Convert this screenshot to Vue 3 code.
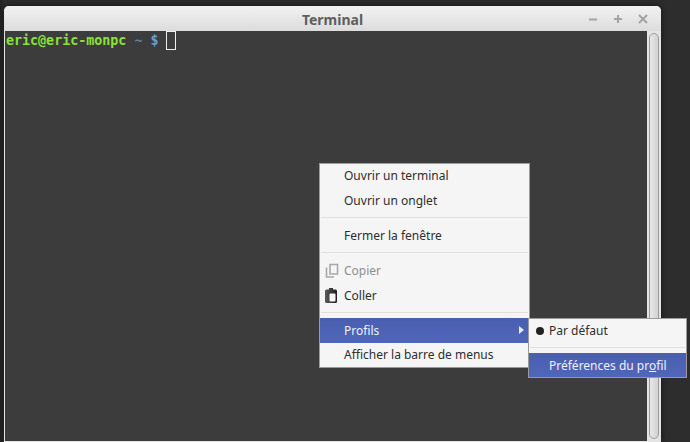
<script setup>
const topItems = [
  { label: 'Ouvrir un terminal' },
  { label: 'Ouvrir un onglet' }
]
</script>

<template>
  <div class="desktop">
    <div class="window">
      <header class="titlebar">
        <span class="title">Terminal</span>
        <div class="controls">
          <svg width="12" height="12" viewBox="0 0 12 12"><path d="M2 6.500h8" stroke="#a3a3a3" stroke-width="2"/></svg>
          <svg width="12" height="12" viewBox="0 0 12 12"><path d="M2 6h8M6 2v8" stroke="#a3a3a3" stroke-width="2"/></svg>
          <svg width="12" height="12" viewBox="0 0 12 12"><path d="M2 2l8 8M10 2l-8 8" stroke="#a3a3a3" stroke-width="2"/></svg>
        </div>
      </header>
      <div class="body">
        <div class="terminal">
          <div class="prompt"><span class="green">eric@eric-monpc</span> <span class="blue1">~</span> <span class="blue2">$</span> <span class="cursor"></span></div>
        </div>
        <div class="scrollbar"><div class="thumb"></div></div>
      </div>
    </div>

    <div class="menu main-menu">
      <div v-for="i in topItems" :key="i.label" class="item">{{ i.label }}</div>
      <div class="sep"></div>
      <div class="item">Fermer la fenêtre</div>
      <div class="sep"></div>
      <div class="item disabled">
        <svg class="icon" width="14" height="15" viewBox="0 0 14 15"><path d="M5 1.500h7.500v9.500H5z M1.500 4.500v9.500h7.500" fill="none" stroke="#a8a8a8" stroke-width="1.600"/></svg>
        Copier
      </div>
      <div class="item">
        <svg class="icon paste" width="12" height="15" viewBox="0 0 12 15">
          <defs><linearGradient id="clip" x1="0" y1="0" x2="1" y2="0"><stop offset="0" stop-color="#5a5a5a"/><stop offset="1" stop-color="#1e1e1e"/></linearGradient></defs>
          <path d="M4 0h4v1.500h2.500A1.500 1.500 0 0 1 12 3v10.500a1.500 1.500 0 0 1-1.500 1.500h-9A1.500 1.500 0 0 1 0 13.500V3a1.500 1.500 0 0 1 1.500-1.500H4z" fill="url(#clip)"/>
          <rect x="4.500" y="5.500" width="6" height="8" rx="1" fill="#f5f5f5"/>
        </svg>
        Coller
      </div>
      <div class="sep tight"></div>
      <div class="item active">Profils<span class="arrow"></span></div>
      <div class="item short">Afficher la barre de menus</div>
    </div>

    <div class="menu sub-menu">
      <div class="item short"><span class="dot"></span>Par défaut</div>
      <div class="sep tight-sub"></div>
      <div class="item active short">Préférences du pr<u>o</u>fil</div>
    </div>
  </div>
</template>

<style>
html, body { margin: 0; background: #2a2a2a; overflow: hidden; }
</style>

<style scoped>
.desktop {
  position: relative;
  width: 690px;
  height: 442px;
  overflow: hidden;
  padding: 6px 29px 0 4px;
  box-sizing: border-box;
  background: linear-gradient(90deg, #222 0, #2d2d2d 4px, #2d2d2d 100%);
  font-family: "Noto Sans", sans-serif;
}
.window {
  height: 436px;
  display: flex;
  flex-direction: column;
  border-radius: 5px 5px 0 0;
  overflow: hidden;
  background: #e4e4e4;
  box-shadow: 0 0 6px rgba(0, 0, 0, .6);
}
.titlebar {
  position: relative;
  flex: 0 0 25px;
  display: flex;
  align-items: center;
  justify-content: center;
  background: linear-gradient(#f2f2f2, #dcdcdc);
}
.title {
  font-size: 14px;
  font-weight: 700;
  color: #5e5e5e;
  padding-top: 2px;
}
.controls {
  position: absolute;
  right: 12px;
  top: 7px;
  display: flex;
  gap: 13px;
}
.body {
  flex: 1;
  display: flex;
  min-height: 0;
  padding: 0 0 1px 1px;
}
.terminal {
  flex: 1;
  background: #3c3c3c;
  padding: 1px 0 0 1px;
  font: 700 13.33px/17px "DejaVu Sans Mono", monospace;
}
.prompt { white-space: pre; }
.green { color: #8ae234; }
.blue1 { color: #5f7f9f; }
.blue2 { color: #6a9fd0; }
.cursor {
  display: inline-block;
  vertical-align: top;
  width: 10px;
  height: 19px;
  border: 1px solid #eee;
  box-sizing: border-box;
  margin: -1px 0 0 -1px;
}
.scrollbar {
  flex: 0 0 14px;
  box-sizing: border-box;
  padding: 2px;
  background: #e4e4e4;
}
.thumb {
  height: 100%;
  box-sizing: border-box;
  border: 1px solid #9c9c9c;
  border-radius: 6px;
  background: linear-gradient(90deg, #e8e8e8, #d2d2d2);
}
.menu {
  position: absolute;
  box-sizing: border-box;
  background: #f5f5f5;
  border: 1px solid #9a9a9a;
  font-size: 12px;
  color: #2e2e2e;
}
.main-menu { left: 319px; top: 163px; width: 211px; }
.sub-menu { left: 528px; top: 318px; width: 159px; }
.item {
  position: relative;
  height: 25px;
  line-height: 24px;
  padding-left: 24px;
  white-space: nowrap;
}
.short { height: 24px; }
.disabled { color: #8f8f8f; }
.icon { position: absolute; left: 5px; top: 4px; }
.sep {
  height: 1px;
  margin: 3px 1px 6px;
  background: #e0e0e0;
}
.tight { margin-bottom: 5px; }
.tight-sub { margin: 4px 1px 5px; }
.sub-menu .item { padding-left: 20px; }
.active {
  background: linear-gradient(#4a5fb0, #5066b8);
  color: #eef0fa;
  line-height: 26px;
}
.main-menu .active { margin-right: 1px; }
.arrow {
  position: absolute;
  right: 4px;
  top: 8px;
  border-left: 5px solid #e8e8f4;
  border-top: 4px solid transparent;
  border-bottom: 4px solid transparent;
}
.dot {
  position: absolute;
  left: 7px;
  top: 8px;
  width: 8px;
  height: 8px;
  border-radius: 50%;
  background: #222;
}
</style>
